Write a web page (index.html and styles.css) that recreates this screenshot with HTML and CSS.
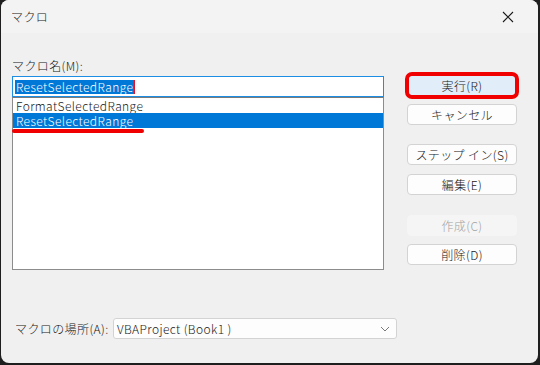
FILE: index.html
```
<!DOCTYPE html>
<html lang="ja">

<head>
    <meta charset="UTF-8">
    <meta name="viewport" content="width=device-width, initial-scale=1.0">
    <title>マクロ</title>
    <link rel="stylesheet" href="styles.css">
</head>

<body>
    <div class="window">
        <div class="titlebar">
            <span class="title">マクロ</span>
            <svg class="close" width="12" height="12" viewBox="0 0 12 12">
                <path d="M1 1 L11 11 M11 1 L1 11" stroke="#1a1a1a" stroke-width="1.1" fill="none" />
            </svg>
        </div>
        <div class="content">
            <div class="left">
                <div class="label">マクロ名(M):</div>
                <div class="input"><span class="sel">ResetSelectedRange</span><span class="caret"></span></div>
                <div class="list">
                    <div class="item">FormatSelectedRange</div>
                    <div class="item active">ResetSelectedRange</div>
                    <div class="mark"></div>
                </div>
            </div>
            <div class="right">
                <button class="btn default">実行(R)</button>
                <button class="btn">キャンセル</button>
                <button class="btn group">ステップ イン(S)</button>
                <button class="btn near">編集(E)</button>
                <button class="btn group wide" disabled>作成(C)</button>
                <button class="btn">削除(D)</button>
            </div>
        </div>
        <div class="place">
            <span class="place-label">マクロの場所(A):</span>
            <div class="select">
                <span>VBAProject (Book1 )</span>
                <svg width="10" height="6" viewBox="0 0 10 6">
                    <path d="M1 1 L5 5 L9 1" stroke="#7a7a7a" stroke-width="1" fill="none" />
                </svg>
            </div>
        </div>
    </div>
</body>

</html>
```

FILE: styles.css
```
* {
    margin: 0;
    padding: 0;
    box-sizing: border-box;
}

body {
    width: 540px;
    height: 365px;
    background-color: #1e1e1e;
    font-family: "Noto Sans CJK JP", "Noto Sans", sans-serif;
    font-size: 12px;
    font-weight: 300;
    letter-spacing: 0.4px;
    color: #202020;
    overflow: hidden;
}

.window {
    display: flex;
    flex-direction: column;
    width: 537px;
    height: 363px;
    margin-left: 1px;
    background-color: #f0f0f0;
    border-radius: 8px;
    overflow: hidden;
}

.titlebar {
    display: flex;
    align-items: center;
    justify-content: space-between;
    height: 33px;
    padding: 0 24px 0 10px;
    background-color: #f3f3f3;
}

.title {
    font-size: 12px;
}

.content {
    display: flex;
    padding-left: 11px;
}

.left {
    width: 372px;
}

.label {
    margin-top: 25px;
    line-height: 16px;
}

.input {
    display: flex;
    align-items: center;
    height: 21px;
    margin-top: 2px;
    padding-left: 2px;
    background-color: #fff;
    border: 1px solid #1c8ee3;
}

.sel {
    line-height: 14px;
    padding: 0 1px;
    background-color: #0078d7;
    color: #fff;
}

.caret {
    width: 1px;
    height: 14px;
    background-color: #e81123;
}

.list {
    position: relative;
    height: 173px;
    background-color: #fff;
    border: 1px solid #8c8c8c;
    border-top-color: #7a7a7a;
}

.item {
    height: 15px;
    line-height: 15px;
    padding-left: 3px;
    overflow: hidden;
}

.item.active {
    background-color: #0078d7;
    color: #fff;
}

.mark {
    position: absolute;
    left: -1px;
    top: 31px;
    width: 132px;
    height: 4px;
    border-radius: 2px;
    background-color: #f00000;
}

.right {
    display: flex;
    flex-direction: column;
    margin-left: 23px;
    padding-top: 42px;
}

.btn {
    width: 110px;
    height: 21px;
    margin-top: 8px;
    font-family: inherit;
    font-size: 12px;
    font-weight: inherit;
    letter-spacing: inherit;
    color: #202020;
    background-color: #fdfdfd;
    border: 1px solid #d3d3d3;
    border-radius: 4px;
}

.btn.group {
    margin-top: 19px;
}

.btn.near {
    margin-top: 9px;
}

.btn.wide {
    margin-top: 20px;
}

.btn.default {
    position: relative;
    margin-top: 0;
    background-color: #e1eefa;
    border-color: #0067c0;
}

.btn.default::after {
    content: "";
    position: absolute;
    top: -4px;
    left: -3px;
    right: -3px;
    bottom: -4px;
    border: 4px solid #f00000;
    border-radius: 7px;
}

.btn:disabled {
    color: #a3a3a3;
    background-color: #f5f5f5;
    border-color: #f5f5f5;
}

.place {
    display: flex;
    align-items: center;
    margin-top: 48px;
    padding-left: 14px;
}

.place-label {
    width: 98px;
}

.select {
    display: flex;
    align-items: center;
    justify-content: space-between;
    width: 284px;
    height: 21px;
    padding: 0 6px 0 3px;
    background-color: #fdfdfd;
    border: 1px solid #d3d3d3;
    border-radius: 3px;
}
```
